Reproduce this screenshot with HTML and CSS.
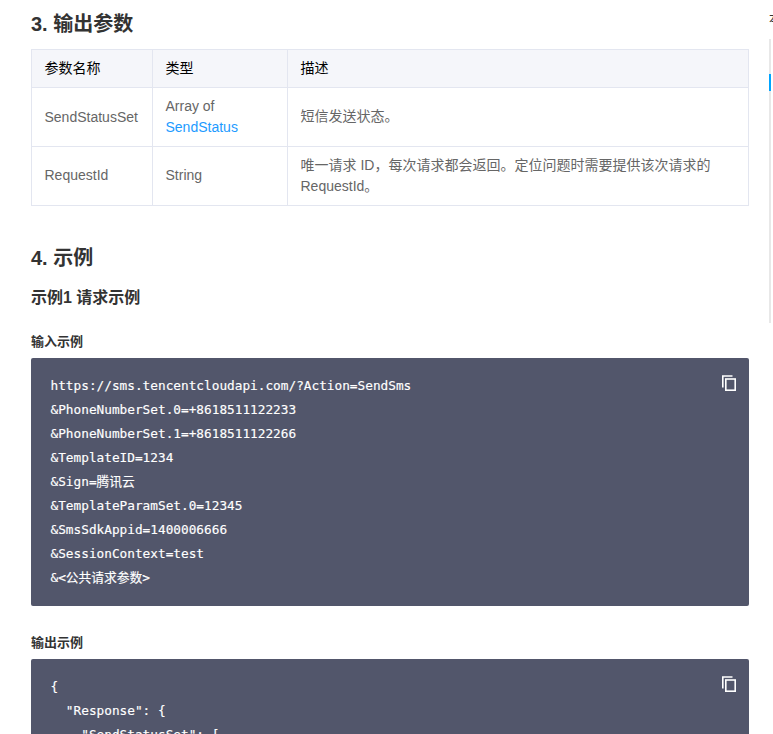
FILE: index.html
```html
<!DOCTYPE html>
<html lang="zh-CN">
<head>
<meta charset="utf-8">
<title>输出参数</title>
<link rel="stylesheet" href="styles.css">
</head>
<body>
<div class="page">
  <main class="doc">
    <h2 class="h-first">3. 输出参数</h2>
    <table class="params">
      <colgroup><col class="c1"><col class="c2"><col class="c3"></colgroup>
      <thead>
        <tr><th>参数名称</th><th>类型</th><th>描述</th></tr>
      </thead>
      <tbody>
        <tr><td>SendStatusSet</td><td>Array of <a href="#">SendStatus</a></td><td class="up">短信发送状态。</td></tr>
        <tr><td class="up">RequestId</td><td class="up">String</td><td>唯一请求 ID，每次请求都会返回。定位问题时需要提供该次请求的 RequestId。</td></tr>
      </tbody>
    </table>
    <h2 class="h-second">4. 示例</h2>
    <h3>示例1 请求示例</h3>
    <h4 class="h4-in">输入示例</h4>
    <div class="code">
      <svg class="copy" viewBox="0 0 14 16" width="14" height="16"><path d="M10.5 1H.8v11.5" fill="none" stroke="currentColor" stroke-width="1.6"/><rect x="3.8" y="4" width="9.4" height="11.2" fill="none" stroke="currentColor" stroke-width="1.6"/></svg>
<pre>https://sms.tencentcloudapi.com/?Action=SendSms
&amp;PhoneNumberSet.0=+8618511122233
&amp;PhoneNumberSet.1=+8618511122266
&amp;TemplateID=1234
&amp;Sign=腾讯云
&amp;TemplateParamSet.0=12345
&amp;SmsSdkAppid=1400006666
&amp;SessionContext=test
&amp;&lt;公共请求参数&gt;</pre>
    </div>
    <h4 class="h4-out">输出示例</h4>
    <div class="code">
      <svg class="copy" viewBox="0 0 14 16" width="14" height="16"><path d="M10.5 1H.8v11.5" fill="none" stroke="currentColor" stroke-width="1.6"/><rect x="3.8" y="4" width="9.4" height="11.2" fill="none" stroke="currentColor" stroke-width="1.6"/></svg>
<pre>{
  "Response": {
    "SendStatusSet": [
      {
        "SerialNo": "2028:f825e6c0a5b14f5c9b2f",
        "PhoneNumber": "+8618511122233",
        "Fee": 1
      }
    ]
  }
}</pre>
    </div>
  </main>
  <aside class="toc">
    <div class="toc-title">本页目录</div>
    <div class="toc-track"><div class="toc-thumb"></div></div>
  </aside>
</div>
</body>
</html>
```
FILE: styles.css
```css
html, body { margin: 0; padding: 0; height: 734px; overflow: hidden; background: #fff; }
body { font-family: "Liberation Sans", "Noto Sans CJK SC", sans-serif; font-size: 14px; color: #666; }
.page { display: flex; width: 773px; height: 734px; overflow: hidden; }
.doc { width: 718px; margin-left: 31px; flex: none; }
h2, h3, h4 { margin: 0; color: #333; font-weight: 700; }
h2 { font-size: 20px; line-height: 28px; }
.h-first { margin-top: 10px; }
.h-second { margin-top: 38px; }
h3 { font-size: 16px; line-height: 24px; margin-top: 14px; }
h4 { font-size: 13px; line-height: 20px; }
.h4-in { margin-top: 22px; }
.h4-out { margin-top: 27px; }
.params { border-collapse: collapse; table-layout: fixed; width: 718px; margin-top: 11px; line-height: 21px; }
.c1 { width: 121px; } .c2 { width: 135px; }
.params th, .params td { border: 1px solid #e3e6f0; padding: 8px 12.5px; text-align: left; vertical-align: middle; }
.params .up { padding-bottom: 10px; padding-top: 8px; }
.params th { background: #f5f6fa; color: #000; font-weight: 400; height: 21px; }
.params a { color: #1d9bff; text-decoration: none; }
.code { position: relative; margin-top: 6px; background: #52566b; border-radius: 2px; padding: 16px 19.5px; }
.code pre { margin: 0; font-family: "DejaVu Sans Mono", "Noto Sans CJK SC", monospace; font-size: 12.75px; line-height: 24px; color: #fff; -webkit-text-stroke: 0.15px #fff; }
.copy { position: absolute; top: 17px; right: 13px; color: #fff; }
.toc { margin-left: 20px; flex: none; width: 100px; }
.toc-title { font-size: 12px; line-height: 16px; margin-top: 11px; color: #333; }
.toc-track { width: 2px; height: 284px; margin-top: 12px; background: #e8e8e8; position: relative; }
.toc-thumb { position: absolute; top: 35px; left: 0; width: 2px; height: 17px; background: #00a4ff; }
```
